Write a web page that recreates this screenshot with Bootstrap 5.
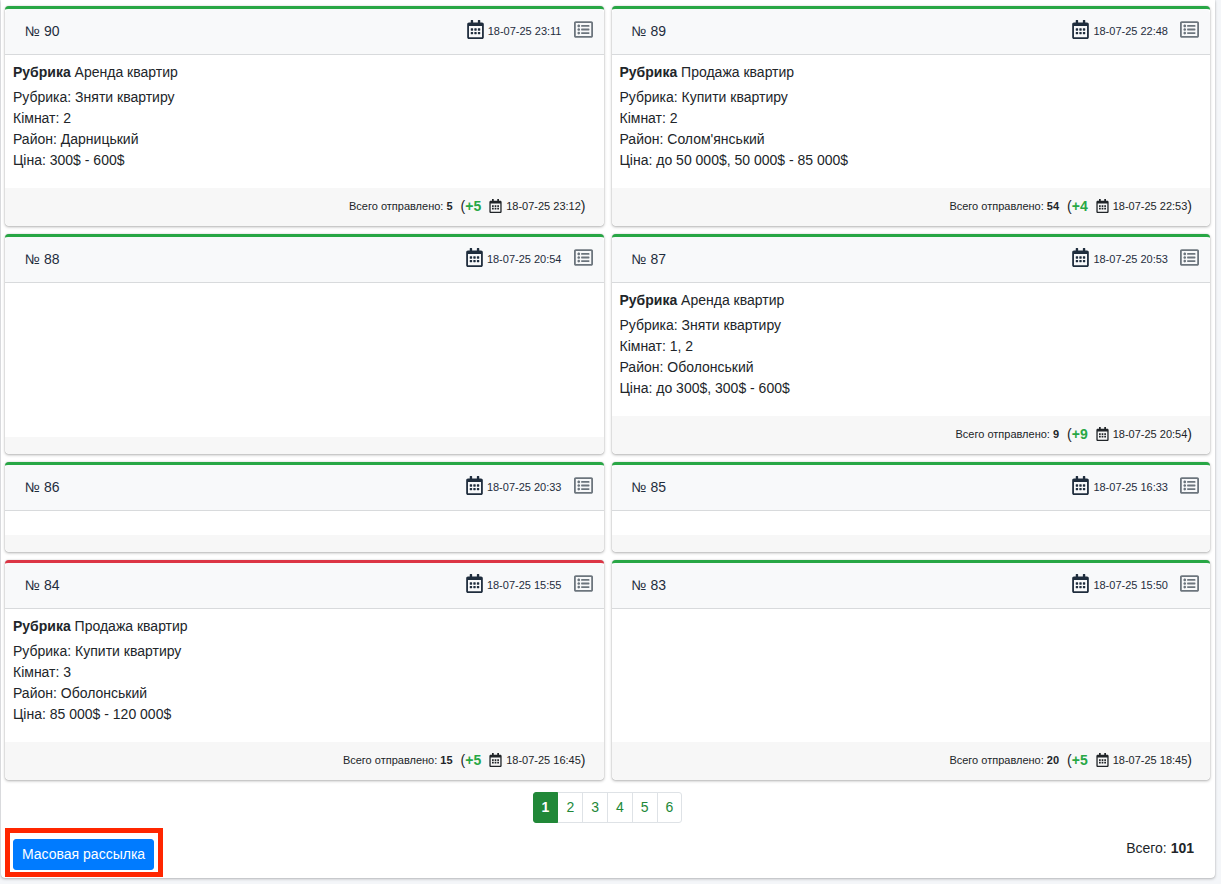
<!DOCTYPE html>
<html lang="ru">
<head>
<meta charset="utf-8">
<meta name="viewport" content="width=device-width, initial-scale=1">
<title>Рассылки</title>
<link href="https://cdn.jsdelivr.net/npm/bootstrap@5.3.0/dist/css/bootstrap.min.css" rel="stylesheet">
<style>
  body { background: #f4f6f9; color: #212529; font: 14px/21px "Liberation Sans", Arial, sans-serif; }
  .panel { background: #fff; margin: 0 6px 6px 1px; padding: 6px 5px 1px 4px; border-radius: 0 0 4px 4px; box-shadow: 0 0 1px rgba(0,0,0,.25), 0 1px 3px rgba(0,0,0,.25); }
  .mail-grid { --bs-gutter-x: 8px; --bs-gutter-y: 8px; }
  .mail-card { border: 0; border-top: 3px solid #28a745; border-radius: 4px; box-shadow: 0 0 1px rgba(0,0,0,.25), 0 1px 3px rgba(0,0,0,.3); }
  .mail-card.failed { border-top-color: #dc3545; }
  .mail-card .card-header { height: 46px; padding: 0 11px 0 20px; background: #f8f9fa; border-color: #d8dadc; color: #1f2d3d; }
  .mail-card .card-body { padding: 7px 8px 17px; }
  .mail-card .card-footer { padding: 8px 18px 9px; background: #f7f7f7; border: 0; }
  .rubric { margin-bottom: 4px; }
  .stamp { font-size: 11px; }
  .ico-date { width: 17px; height: 19px; margin: -4px 4px 0 0; }
  .ico-list { width: 19px; height: 19px; margin: -4px 0 0 12px; color: #6c757d; display: block; }
  .ico-sent { width: 13px; height: 14px; margin: -2px 4px 0 8px; }
  .plus { color: #28a745; }
  .pages { --bs-pagination-padding-x: 8px; --bs-pagination-padding-y: 4px; --bs-pagination-font-size: 14px; --bs-pagination-border-radius: 3px; --bs-pagination-color: #218838; --bs-pagination-hover-color: #218838; --bs-pagination-active-bg: #218838; --bs-pagination-active-border-color: #218838; margin: 12px 0 5px; }
  .pages .active { font-weight: bold; }
  .highlight { border: 5px solid #ff2600; padding: 6px 4px 2px 3px; }
  .btn-send { --bs-btn-bg: #007bff; --bs-btn-border-color: #007bff; --bs-btn-color: #fff; --bs-btn-padding-x: 8px; --bs-btn-padding-y: 4px; --bs-btn-font-size: 14px; --bs-btn-line-height: 21px; --bs-btn-border-radius: 3px; }
  .total { margin: 10px 16px 0 0; }
</style>
</head>
<body>
<svg class="d-none" aria-hidden="true">
  <symbol id="cal" viewBox="0 0 448 512"><path fill="currentColor" d="M148 288h-40c-6.600 0-12-5.400-12-12v-40c0-6.600 5.400-12 12-12h40c6.600 0 12 5.400 12 12v40c0 6.600-5.400 12-12 12zm108-12v-40c0-6.600-5.400-12-12-12h-40c-6.600 0-12 5.400-12 12v40c0 6.600 5.400 12 12 12h40c6.600 0 12-5.400 12-12zm96 0v-40c0-6.600-5.400-12-12-12h-40c-6.600 0-12 5.400-12 12v40c0 6.600 5.400 12 12 12h40c6.600 0 12-5.400 12-12zm-96 96v-40c0-6.600-5.400-12-12-12h-40c-6.600 0-12 5.400-12 12v40c0 6.600 5.400 12 12 12h40c6.600 0 12-5.400 12-12zm-96 0v-40c0-6.600-5.400-12-12-12h-40c-6.600 0-12 5.400-12 12v40c0 6.600 5.400 12 12 12h40c6.600 0 12-5.400 12-12zm192 0v-40c0-6.600-5.400-12-12-12h-40c-6.600 0-12 5.400-12 12v40c0 6.600 5.400 12 12 12h40c6.600 0 12-5.400 12-12zm96-260v352c0 26.500-21.500 48-48 48H48c-26.500 0-48-21.500-48-48V112c0-26.500 21.500-48 48-48h48V12c0-6.600 5.400-12 12-12h40c6.600 0 12 5.400 12 12v52h128V12c0-6.600 5.400-12 12-12h40c6.600 0 12 5.400 12 12v52h48c26.500 0 48 21.500 48 48zm-48 346V160H48v298c0 3.300 2.700 6 6 6h340c3.300 0 6-2.700 6-6z"/></symbol>
  <symbol id="list" viewBox="0 0 512 512"><path fill="currentColor" d="M464 32H48C21.500 32 0 53.500 0 80v352c0 26.500 21.500 48 48 48h416c26.500 0 48-21.500 48-48V80c0-26.500-21.500-48-48-48zm-6 400H54a6 6 0 0 1-6-6V86a6 6 0 0 1 6-6h404a6 6 0 0 1 6 6v340a6 6 0 0 1-6 6zm-42-92v24c0 6.600-5.400 12-12 12H204c-6.600 0-12-5.400-12-12v-24c0-6.600 5.400-12 12-12h200c6.600 0 12 5.400 12 12zm0-96v24c0 6.600-5.400 12-12 12H204c-6.600 0-12-5.400-12-12v-24c0-6.600 5.400-12 12-12h200c6.600 0 12 5.400 12 12zm0-96v24c0 6.600-5.400 12-12 12H204c-6.600 0-12-5.400-12-12v-24c0-6.600 5.400-12 12-12h200c6.600 0 12 5.400 12 12zm-252 12c0 19.900-16.100 36-36 36s-36-16.100-36-36 16.100-36 36-36 36 16.100 36 36zm0 96c0 19.900-16.100 36-36 36s-36-16.100-36-36 16.100-36 36-36 36 16.100 36 36zm0 96c0 19.900-16.100 36-36 36s-36-16.100-36-36 16.100-36 36-36 36 16.100 36 36z"/></symbol>
</svg>

<main class="panel">
  <div class="row row-cols-2 mail-grid">
    <div class="col"><article class="card mail-card h-100">
      <div class="card-header d-flex align-items-center"><span class="me-auto">№ 90</span><svg class="ico-date"><use href="#cal"/></svg><span class="stamp">18-07-25 23:11</span><a href="#" aria-label="Подробнее"><svg class="ico-list"><use href="#list"/></svg></a></div>
      <div class="card-body"><div class="rubric"><b>Рубрика</b> Аренда квартир</div><div>Рубрика: Зняти квартиру</div><div>Кімнат: 2</div><div>Район: Дарницький</div><div>Ціна: 300$ - 600$</div></div>
      <div class="card-footer d-flex align-items-center justify-content-end"><span class="stamp me-2">Всего отправлено: <b>5</b></span><span>(<b class="plus">+5</b></span><svg class="ico-sent"><use href="#cal"/></svg><span class="stamp">18-07-25 23:12</span><span>)</span></div>
    </article></div>
    <div class="col"><article class="card mail-card h-100">
      <div class="card-header d-flex align-items-center"><span class="me-auto">№ 89</span><svg class="ico-date"><use href="#cal"/></svg><span class="stamp">18-07-25 22:48</span><a href="#" aria-label="Подробнее"><svg class="ico-list"><use href="#list"/></svg></a></div>
      <div class="card-body"><div class="rubric"><b>Рубрика</b> Продажа квартир</div><div>Рубрика: Купити квартиру</div><div>Кімнат: 2</div><div>Район: Солом'янський</div><div>Ціна: до 50 000$, 50 000$ - 85 000$</div></div>
      <div class="card-footer d-flex align-items-center justify-content-end"><span class="stamp me-2">Всего отправлено: <b>54</b></span><span>(<b class="plus">+4</b></span><svg class="ico-sent"><use href="#cal"/></svg><span class="stamp">18-07-25 22:53</span><span>)</span></div>
    </article></div>
    <div class="col"><article class="card mail-card h-100">
      <div class="card-header d-flex align-items-center"><span class="me-auto">№ 88</span><svg class="ico-date"><use href="#cal"/></svg><span class="stamp">18-07-25 20:54</span><a href="#" aria-label="Подробнее"><svg class="ico-list"><use href="#list"/></svg></a></div>
      <div class="card-body"></div>
      <div class="card-footer"></div>
    </article></div>
    <div class="col"><article class="card mail-card h-100">
      <div class="card-header d-flex align-items-center"><span class="me-auto">№ 87</span><svg class="ico-date"><use href="#cal"/></svg><span class="stamp">18-07-25 20:53</span><a href="#" aria-label="Подробнее"><svg class="ico-list"><use href="#list"/></svg></a></div>
      <div class="card-body"><div class="rubric"><b>Рубрика</b> Аренда квартир</div><div>Рубрика: Зняти квартиру</div><div>Кімнат: 1, 2</div><div>Район: Оболонський</div><div>Ціна: до 300$, 300$ - 600$</div></div>
      <div class="card-footer d-flex align-items-center justify-content-end"><span class="stamp me-2">Всего отправлено: <b>9</b></span><span>(<b class="plus">+9</b></span><svg class="ico-sent"><use href="#cal"/></svg><span class="stamp">18-07-25 20:54</span><span>)</span></div>
    </article></div>
    <div class="col"><article class="card mail-card h-100">
      <div class="card-header d-flex align-items-center"><span class="me-auto">№ 86</span><svg class="ico-date"><use href="#cal"/></svg><span class="stamp">18-07-25 20:33</span><a href="#" aria-label="Подробнее"><svg class="ico-list"><use href="#list"/></svg></a></div>
      <div class="card-body"></div>
      <div class="card-footer"></div>
    </article></div>
    <div class="col"><article class="card mail-card h-100">
      <div class="card-header d-flex align-items-center"><span class="me-auto">№ 85</span><svg class="ico-date"><use href="#cal"/></svg><span class="stamp">18-07-25 16:33</span><a href="#" aria-label="Подробнее"><svg class="ico-list"><use href="#list"/></svg></a></div>
      <div class="card-body"></div>
      <div class="card-footer"></div>
    </article></div>
    <div class="col"><article class="card mail-card failed h-100">
      <div class="card-header d-flex align-items-center"><span class="me-auto">№ 84</span><svg class="ico-date"><use href="#cal"/></svg><span class="stamp">18-07-25 15:55</span><a href="#" aria-label="Подробнее"><svg class="ico-list"><use href="#list"/></svg></a></div>
      <div class="card-body"><div class="rubric"><b>Рубрика</b> Продажа квартир</div><div>Рубрика: Купити квартиру</div><div>Кімнат: 3</div><div>Район: Оболонський</div><div>Ціна: 85 000$ - 120 000$</div></div>
      <div class="card-footer d-flex align-items-center justify-content-end"><span class="stamp me-2">Всего отправлено: <b>15</b></span><span>(<b class="plus">+5</b></span><svg class="ico-sent"><use href="#cal"/></svg><span class="stamp">18-07-25 16:45</span><span>)</span></div>
    </article></div>
    <div class="col"><article class="card mail-card h-100">
      <div class="card-header d-flex align-items-center"><span class="me-auto">№ 83</span><svg class="ico-date"><use href="#cal"/></svg><span class="stamp">18-07-25 15:50</span><a href="#" aria-label="Подробнее"><svg class="ico-list"><use href="#list"/></svg></a></div>
      <div class="card-body"></div>
      <div class="card-footer d-flex align-items-center justify-content-end"><span class="stamp me-2">Всего отправлено: <b>20</b></span><span>(<b class="plus">+5</b></span><svg class="ico-sent"><use href="#cal"/></svg><span class="stamp">18-07-25 18:45</span><span>)</span></div>
    </article></div>
  </div>

  <nav aria-label="Страницы">
    <ul class="pagination pages justify-content-center">
      <li class="page-item active"><a class="page-link" href="#" aria-current="page">1</a></li>
      <li class="page-item"><a class="page-link" href="#">2</a></li>
      <li class="page-item"><a class="page-link" href="#">3</a></li>
      <li class="page-item"><a class="page-link" href="#">4</a></li>
      <li class="page-item"><a class="page-link" href="#">5</a></li>
      <li class="page-item"><a class="page-link" href="#">6</a></li>
    </ul>
  </nav>

  <div class="d-flex justify-content-between align-items-start">
    <div class="highlight"><button type="button" class="btn btn-send d-block">Масовая рассылка</button></div>
    <div class="total">Всего: <b>101</b></div>
  </div>
</main>
<script src="https://cdn.jsdelivr.net/npm/bootstrap@5.3.0/dist/js/bootstrap.bundle.min.js"></script>
</body>
</html>
